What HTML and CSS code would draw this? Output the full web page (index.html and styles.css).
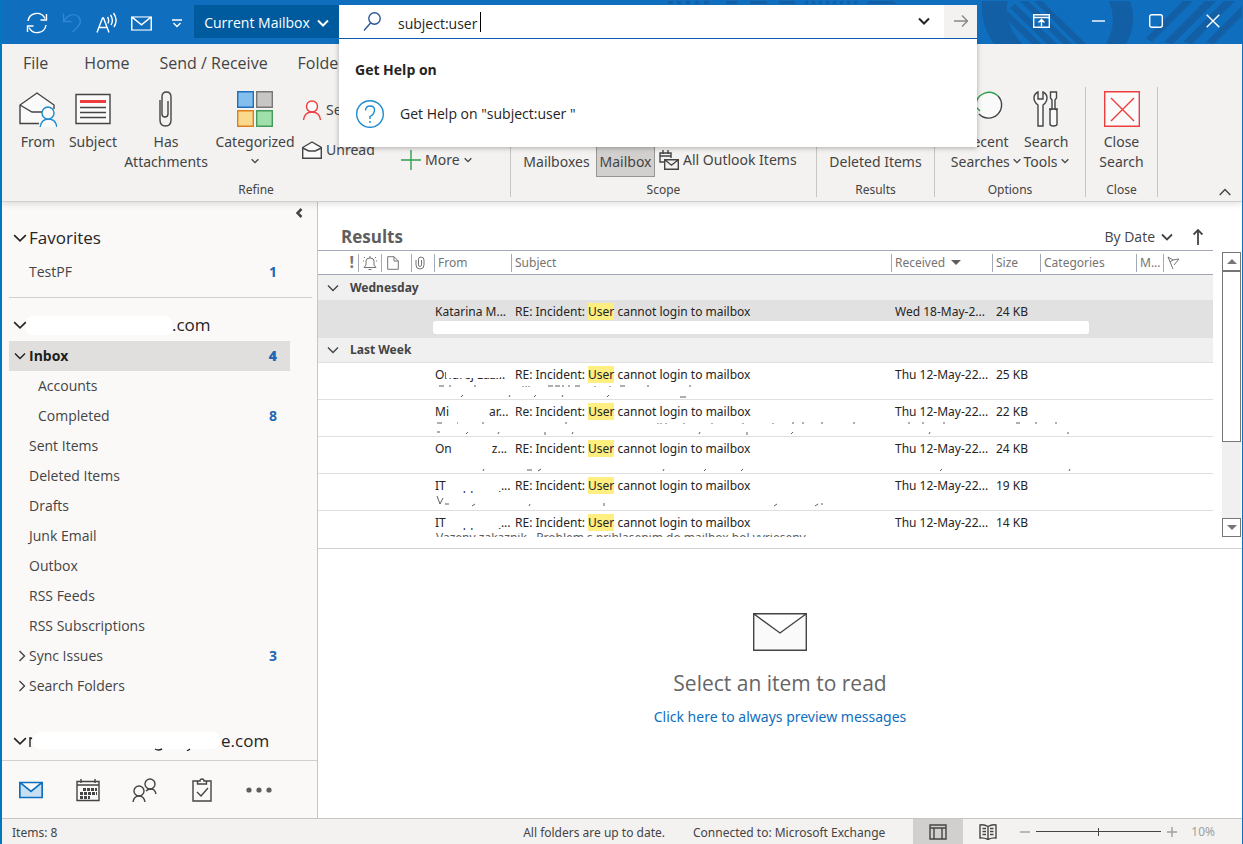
FILE: index.html
```html
<!DOCTYPE html>
<html lang="en">
  <head>
    <meta charset="UTF-8" />
    <meta name="viewport" content="width=device-width, initial-scale=1.0" />
    <title>Inbox - Outlook</title>
    <link rel="stylesheet" href="styles.css">
  </head>
  <body>
    <!-- shared icons -->
    <svg class="defs" aria-hidden="true">
      <symbol id="chevron" viewBox="0 0 12 12"><path d="M1 3.5l5 5 5-5" /></symbol>
      <symbol id="envelope" viewBox="0 0 20 14"><path d="M.7.7h18.6v12.6H.7zM.7.7L10 8.2 19.3.7" /></symbol>
    </svg>

    <header class="titlebar">
      <svg class="pattern" viewBox="0 0 574 44" aria-hidden="true">
        <path d="M0 1h5v3h-5zM9 1h4v3h-4zM18 1h4v3h-4zM27 1h4v3h-4zM36 1h5v3h-5zM58 1h11v3h-11zM82 1h17v3h-17zM111 1h16v3h-16zM137 1h3v3h-3zM144 1h3v3h-3zM151 1h3v3h-3zM158 1h3v3h-3zM165 1h3v3h-3zM172 1h3v3h-3zM179 1h3v3h-3zM186 1h3v3h-3zM198 4l3-3h24l4 3z" />
        <path d="M314 1h26q-6 20 14 43h-28q-14-20-12-43zM441 1h21q8 22-4 43h-20q12-20 3-43z" />
        <path d="M333 14l6-3 35 33h-10zM342 8l5-4 42 40h-10zM352 1h8l44 43h-9zM366 1h8l44 43h-9z" />
        <path d="M478 38L515 1h10l-41 41zM496 42L537 1h11l-43 43zM515 42L556 1h11l-43 43zM538 42L574 6v10l-28 28z" />
      </svg>
      <div class="quick">
        <button aria-label="Send and receive all folders">
          <svg width="22" height="22" viewBox="0 0 22 22"><path d="M2 9a9 9 0 0 1 17-2.500M20.500 2v6h-6M20 13a9 9 0 0 1-17 2.500M1.500 20v-6h6" /></svg>
        </button>
        <button class="dim" aria-label="Undo">
          <svg width="20" height="22" viewBox="0 0 20 22"><path d="M1.500 1.500v8h8M2 9C6 2 13 1 16.500 5s2 7-1 10l-5 5" /></svg>
        </button>
        <button aria-label="Read aloud">
          <svg width="22" height="22" viewBox="0 0 22 22"><path d="M1 20.500L6.500 6h1L13 20.500M3 15.500h8M11.500 5q2 3 .5 6.500M14.500 3q3.500 5 .5 10M17.500 1q5 7 .5 14" /></svg>
        </button>
        <button aria-label="New email">
          <svg width="21" height="15" viewBox="0 0 20 14"><use href="#envelope" /></svg>
        </button>
        <button class="narrow" aria-label="Customize toolbar">
          <svg width="10" height="9" viewBox="0 0 10 9"><path d="M0 1h10M1.500 4L5 7.500 8.500 4" /></svg>
        </button>
      </div>
      <button class="scope-select">Current Mailbox <svg width="12" height="12"><use href="#chevron" /></svg></button>
      <div class="search">
        <form class="search-box">
          <svg class="lens" width="18" height="20" viewBox="0 0 18 20"><circle cx="11.500" cy="6.500" r="5.700" /><path d="M7.500 11L1 18.500" /></svg>
          <input type="text" aria-label="Search" value="subject:user ">
          <button class="search-toggle" type="button" aria-label="Advanced search"><svg width="12" height="12"><use href="#chevron" /></svg></button>
          <button class="search-go" type="button" aria-label="Search now"><svg width="14" height="12" viewBox="0 0 14 12"><path d="M0 6h13M8 .500L13.500 6 8 11.500" /></svg></button>
        </form>
        <div class="suggestions">
          <h2>Get Help on</h2>
          <a href="#">
            <svg width="30" height="28" viewBox="-1 0 30 28"><circle cx="14" cy="14" r="13.300" /><path d="M9.500 10.500q0-4.500 4.500-4.500t4.500 4-4.500 6.500v2.500M14 21v2" /></svg>
            Get Help on "subject:user "
          </a>
        </div>
      </div>
      <div class="window-buttons">
        <button aria-label="Ribbon display options"><svg width="17" height="14" viewBox="0 0 17 14"><path d="M.700.700h15.600v12.600H.700zM.700 3.500h15.600M8.500 12V5.500M5.500 8.500l3-3 3 3" /></svg></button>
        <button aria-label="Minimize"><svg width="13" height="14" viewBox="0 0 13 14"><path d="M0 7h13" /></svg></button>
        <button aria-label="Maximize"><svg width="14" height="14" viewBox="0 0 14 14"><rect x=".7" y=".7" width="12.600" height="12.600" rx="2" /></svg></button>
        <button aria-label="Close"><svg width="14" height="14" viewBox="0 0 14 14"><path d="M.700.700l12.600 12.600M13.300.700L.700 13.300" /></svg></button>
      </div>
    </header>

    <section class="ribbon">
      <nav class="tabs">
        <a href="#">File</a>
        <a href="#">Home</a>
        <a href="#">Send / Receive</a>
        <a href="#">Folder</a>
      </nav>
      <div class="groups">
        <div class="group refine">
          <div class="commands">
            <button class="big w-from">
              <svg width="38" height="36" viewBox="0 0 38 36"><path class="fill" stroke="none" d="M1 14L18 2l17 12v18H1z" /><path d="M20 32.500H1V14L18 2l17 12v4M1 14l12 7h10" /><g class="blue"><path class="fill" d="M21 37q1-9 8.500-9t8.500 9" /><circle class="fill" cx="29" cy="22" r="6" /></g></svg>
              <span>From</span>
            </button>
            <button class="big w-subject">
              <svg width="36" height="36" viewBox="0 0 36 36"><path class="fill" d="M1 3.500h34v29H1z" /><path class="red-bar" d="M5 10.500h26" /><path d="M5 16.500h26M5 21.500h26M5 26.500h26" /></svg>
              <span>Subject</span>
            </button>
            <button class="big w-attach">
              <svg width="36" height="36" viewBox="0 0 36 36"><path d="M20 10v13q0 3-3 3t-3-3V6q0-5 4.500-5T23 6v23q0 6-5.500 6T12 29V9" /></svg>
              <span>Has<br>Attachments</span>
            </button>
            <button class="big w-cat">
              <svg width="36" height="36" viewBox="0 0 36 36"><path fill="#83beec" stroke="#1e6fbe" d="M.7.700h15.600v15.600H.7z" /><path fill="#c8c6c4" stroke="#797775" d="M19.700.700h15.600v15.600H19.700z" /><path fill="#f9d98b" stroke="#e07f1c" d="M.7 19.700h15.600v15.600H.7z" /><path fill="#9fe0aa" stroke="#439c5b" d="M19.700 19.700h15.600v15.600H19.700z" /></svg>
              <span>Categorized</span>
              <svg class="caret" width="8" height="8"><use href="#chevron" /></svg>
            </button>
            <div class="stack wide">
              <button><svg class="red" width="20" height="20" viewBox="0 0 20 20"><circle class="fill" cx="10" cy="6.500" r="5.500" /><path d="M1.500 20q1-8 8.500-8t8.500 8" /></svg>Sent To</button>
              <button><svg width="20" height="18" viewBox="0 0 20 18"><path class="fill" d="M.7 6.500L10 1l9.300 5.500v10.800H.7z" /><path d="M.7 7l6 3h6.600l6-3" /></svg>Unread</button>
            </div>
            <div class="stack more">
              <button><svg class="green" width="20" height="20" viewBox="0 0 20 20"><path d="M10 0v20M0 10h20" /></svg>More <svg class="caret" width="8" height="8"><use href="#chevron" /></svg></button>
            </div>
          </div>
          <h3>Refine</h3>
        </div>
        <div class="group scope">
          <div class="commands">
            <button class="big w-all"><span>All<br>Mailboxes</span></button>
            <button class="big w-box on" aria-label="Current Mailbox"><span>Mailbox</span></button>
            <div class="stack">
              <button><svg width="20" height="20" viewBox="0 0 20 20"><path d="M5 12H1V3h11v5M1 6h11M4 0v4M9 0v4M5.700 9.700h13.600v9.600H5.700zM5.700 9.700l6.800 5.500 6.800-5.500" /></svg>All Outlook Items</button>
            </div>
          </div>
          <h3>Scope</h3>
        </div>
        <div class="group results">
          <div class="commands"><button class="big"><span>Include<br>Deleted Items</span></button></div>
          <h3>Results</h3>
        </div>
        <div class="group options">
          <div class="commands">
            <button class="big">
              <svg width="36" height="36" viewBox="0 0 36 36"><circle class="fill" cx="21" cy="14" r="13" stroke="none" /><path d="M11 23a13 13 0 1 0 19-18" /><path class="green" d="M30 5A13 13 0 0 0 8 14M4 22l4-6 4 4" /></svg>
              <span>Recent<br>Searches <svg class="caret" width="8" height="8"><use href="#chevron" /></svg></span>
            </button>
            <button class="big">
              <svg width="36" height="36" viewBox="0 0 36 36"><path class="fill" d="M10 35V14Q6 11 6 7t4-6v7h5V1q4 2 4 6t-4 7v21z" /><path class="fill" d="M22.500 1h6v6l-1.500 2v9h-3V9l-1.500-2zM22 20q0-2 3.500-2t3.500 2v13q0 2-3.500 2T22 33zM21 18h9" /></svg>
              <span>Search<br>Tools <svg class="caret" width="8" height="8"><use href="#chevron" /></svg></span>
            </button>
          </div>
          <h3>Options</h3>
        </div>
        <div class="group close">
          <div class="commands">
            <button class="big">
              <svg class="red" width="36" height="36" viewBox="0 0 36 36"><path class="fill" d="M.7.700h34.600v34.600H.7z" /><path d="M7 7l23 23M30 7L7 30" /></svg>
              <span>Close<br>Search</span>
            </button>
          </div>
          <h3>Close</h3>
        </div>
        <button class="collapse" aria-label="Collapse the ribbon"><svg width="12" height="8" viewBox="0 0 12 8"><path d="M.7 7L6 1.500 11.300 7" /></svg></button>
      </div>
    </section>

    <div class="main">
      <aside class="sidebar">
        <button class="pane-toggle" aria-label="Minimize the folder pane"><svg width="7" height="10" viewBox="0 0 7 10"><path d="M5.500 1L1.500 5l4 4" /></svg></button>
        <div class="folders">
          <h2><svg width="14" height="14"><use href="#chevron" /></svg>Favorites</h2>
          <a class="favorite" href="#">TestPF <b>1</b></a>
          <hr>
          <h2><svg width="14" height="14"><use href="#chevron" /></svg><span class="blank account"></span>.com</h2>
          <a class="selected" href="#"><svg width="12" height="12"><use href="#chevron" /></svg>Inbox <b>4</b></a>
          <a class="child" href="#">Accounts</a>
          <a class="child" href="#">Completed <b>8</b></a>
          <a href="#">Sent Items</a>
          <a href="#">Deleted Items</a>
          <a href="#">Drafts</a>
          <a href="#">Junk Email</a>
          <a href="#">Outbox</a>
          <a href="#">RSS Feeds</a>
          <a href="#">RSS Subscriptions</a>
          <a href="#"><svg class="closed" width="12" height="12"><use href="#chevron" /></svg>Sync Issues <b>3</b></a>
          <a href="#"><svg class="closed" width="12" height="12"><use href="#chevron" /></svg>Search Folders</a>
          <h2 class="second"><svg width="14" height="14"><use href="#chevron" /></svg><svg class="mailbox" width="192" height="20" viewBox="0 0 192 20"><rect x="4" y="1" width="187" height="17" rx="7" /><path d="M1 6v10M1 8l2-1M126 18q3 2 7 0M161 18l-3 2" /></svg>e.com</h2>
        </div>
        <nav class="modules">
          <a class="current" href="#" aria-label="Mail"><svg width="24" height="18" viewBox="0 0 20 14"><use href="#envelope" /></svg></a>
          <a href="#" aria-label="Calendar"><svg width="24" height="24" viewBox="0 0 24 24"><path d="M1 3.500h22v19H1zM1 7h22M5 1v4M19 1v4" /><path class="dots" d="M7 11.500h14M4 15.500h17M4 19.500h10" /></svg></a>
          <a href="#" aria-label="People"><svg width="25" height="24" viewBox="0 0 25 24"><circle cx="18" cy="6" r="5" /><path d="M14 13q2-2 5-2 4 0 5 5" /><circle cx="7" cy="13" r="5" /><path d="M1 24q1-6 6-6t6 6" /></svg></a>
          <a href="#" aria-label="Tasks"><svg width="20" height="24" viewBox="0 0 20 24"><path d="M5 3H1v20h18V3h-4M5.500 6V3H8q0-2 2-2t2 2h2.500v3zM5 14l4 4 7-8" /></svg></a>
          <a href="#" aria-label="More"><svg width="26" height="6" viewBox="0 0 26 6"><g class="ellipsis"><circle cx="3" cy="3" r="2.600" /><circle cx="13" cy="3" r="2.600" /><circle cx="23" cy="3" r="2.600" /></g></svg></a>
        </nav>
      </aside>

      <main class="content">
        <div class="list-head">
          <h1>Results</h1>
          <button>By Date <svg width="12" height="12"><use href="#chevron" /></svg></button>
          <button aria-label="Reverse sort order"><svg width="10" height="16" viewBox="0 0 10 16"><path d="M5 16V1M.5 5.500L5 1l4.500 4.500" /></svg></button>
        </div>
        <div class="list">
          <table>
            <colgroup>
              <col class="c-imp"><col class="c-bell"><col class="c-type"><col class="c-clip"><col class="c-from"><col><col class="c-date"><col class="c-size"><col class="c-cat"><col class="c-mention"><col class="c-flag">
            </colgroup>
            <thead>
              <tr>
                <th aria-label="Importance"><span class="right">!</span></th>
                <th aria-label="Reminder"><span><svg width="16" height="16" viewBox="0 0 16 16"><path d="M2 12.500h12l-2-2.500V6q0-3-4-3T4 6v4zM6.500 14.500h3M8 1v2M2 2l1 1M14 2l-1 1M1 6h1M14 6h1" /></svg></span></th>
                <th aria-label="Icon"><span class="type"><svg width="12" height="14" viewBox="0 0 12 14"><path d="M.7.700h6.300l4.300 4.300v8.300H.7zM7 .7V5h4.300" /></svg></span></th>
                <th aria-label="Attachment"><span><svg width="10" height="14" viewBox="0 0 10 14"><path d="M1 4v5q0 4 4 4t4-4V4q0-3-3-3T3.500 4v5q0 1.500 1.300 1.500T6.500 9V4" /></svg></span></th>
                <th><span>From</span></th>
                <th><span>Subject</span></th>
                <th><span>Received <i class="sort"></i></span></th>
                <th><span>Size</span></th>
                <th><span>Categories</span></th>
                <th><span>M...</span></th>
                <th aria-label="Flag"><span><svg width="14" height="14" viewBox="0 0 14 14"><path d="M6 13L1 1l5 3 6-1-5 6M3 6l3-2" /></svg></span></th>
              </tr>
            </thead>
            <tbody>
              <tr class="day"><th colspan="11"><svg width="12" height="12"><use href="#chevron" /></svg>Wednesday</th></tr>
              <tr class="mail active">
                <td colspan="4"></td><td>Katarina M...</td><td>RE: Incident: <mark>User</mark> cannot login to mailbox</td><td>Wed 18-May-2...</td><td>24 KB</td><td colspan="3"></td>
              </tr>
              <tr class="preview active"><td colspan="4"></td><td colspan="7"><span class="blank body-text"></span></td></tr>
              <tr class="day"><th colspan="11"><svg width="12" height="12"><use href="#chevron" /></svg>Last Week</th></tr>
            </tbody>
            <tbody class="week">
              <tr class="mail">
                <td colspan="4"></td><td><span class="veil">Ondrej Laz...</span></td><td>RE: Incident: <mark>User</mark> cannot login to mailbox</td><td>Thu 12-May-22...</td><td>25 KB</td><td colspan="3"></td>
              </tr>
              <tr class="preview"><td colspan="4"></td><td colspan="7"><svg width="640" height="14" viewBox="0 0 640 14"><path d="M3 1h5M13 1h2M38 1h2M87 1v1M90 1v1M93 1v1M112 1h5M119 1h5M126 1h2M132 1h2M139 1h5M159 1v1M174 1v1M184 1h5M211 1h2M253 1h2M25 12l2-2M73 12l1-2M98 12l2-2M126 12l1-2M171 12l2-2M244 12h6" /></svg></td></tr>
              <tr class="mail">
                <td colspan="4"></td><td>Mi<span class="gap"></span>ar...</td><td>Re: Incident: <mark>User</mark> cannot login to mailbox</td><td>Thu 12-May-22...</td><td>22 KB</td><td colspan="3"></td>
              </tr>
              <tr class="preview"><td colspan="4"></td><td colspan="7"><svg width="640" height="14" viewBox="0 0 640 14"><path d="M1 1h5M21 1h1M46 1h2M129 1h2M222 1v1M225 1v1M230 1v1M248 1v1M276 1v1M307 1v1M337 1v1M356 1h2M366 1h2M385 1h2M417 1h2M472 1h2M486 1h2M507 1h2M580 1h4M599 1h2M619 1h2M1 10h3M30 12l2-2M62 12l1-2M109 10v3M136 12l1-2M263 12l1-2M311 10v3M355 12l2-2M493 12l1-2M631 11h2" /></svg></td></tr>
              <tr class="mail">
                <td colspan="4"></td><td>On<span class="gap"></span>z...</td><td>RE: Incident: <mark>User</mark> cannot login to mailbox</td><td>Thu 12-May-22...</td><td>24 KB</td><td colspan="3"></td>
              </tr>
              <tr class="preview"><td colspan="4"></td><td colspan="7"><svg width="640" height="14" viewBox="0 0 640 14"><path d="M47 12l1-2M91 11h5M102 12l3-2M227 12l1-2M268 12l2-2M305 12l2-2M504 12l2-2M633 12l1-2" /></svg></td></tr>
              <tr class="mail">
                <td colspan="4"></td><td><span class="veil support">IT Support (...</span></td><td>RE: Incident: <mark>User</mark> cannot login to mailbox</td><td>Thu 12-May-22...</td><td>19 KB</td><td colspan="3"></td>
              </tr>
              <tr class="preview"><td colspan="4"></td><td colspan="7"><svg width="640" height="14" viewBox="0 0 640 14"><path d="M1 0l3 8 3-6M9 8h4M36 10l3-2M93 10l1-2M168 7v3M338 10l3-2M379 10l3-2M386 7v2" /></svg></td></tr>
              <tr class="mail">
                <td colspan="4"></td><td><span class="veil support">IT Support (...</span></td><td>RE: Incident: <mark>User</mark> cannot login to mailbox</td><td>Thu 12-May-22...</td><td>14 KB</td><td colspan="3"></td>
              </tr>
              <tr class="preview last"><td colspan="4"></td><td colspan="7"><div>Vazeny zakaznik,&nbsp; Problem s prihlasenim do mailbox bol vyrieseny.</div></td></tr>
            </tbody>
          </table>
          <div class="scrollbar">
            <button class="up" aria-label="Scroll up"></button>
            <div class="thumb"></div>
            <button class="down" aria-label="Scroll down"></button>
          </div>
        </div>
        <section class="reading">
          <svg width="54" height="38" viewBox="0 0 54 38"><path d="M.7.700h52.600v36.600H.7zM.7.700L27 20 53.300.700" /></svg>
          <p>Select an item to read</p>
          <a href="#">Click here to always preview messages</a>
        </section>
      </main>
    </div>

    <footer class="statusbar">
      <span class="count">Items: 8</span>
      <span class="sync">All folders are up to date.</span>
      <span class="server">Connected to: Microsoft Exchange</span>
      <div class="views">
        <button class="on" aria-label="Normal view"><svg width="18" height="16" viewBox="0 0 18 16"><path d="M1 1h16v14H1zM1 4h16M5 4v11M13 4v11" /></svg></button>
        <button aria-label="Reading view"><svg width="18" height="16" viewBox="0 0 18 16"><path d="M9 2.500Q5 0 1 1v13q4-.500 8 1.500 4-2 8-1.500V1q-4-1-8 1.500v13M3.500 4.500H7M3.500 7.500H7M3.500 10.500H7M11 4.500h3.500M11 7.500h3.500M11 10.500h3.500" /></svg></button>
      </div>
      <div class="zoom">
        <button aria-label="Zoom out"><svg width="10" height="10" viewBox="0 0 10 10"><path d="M0 5h10" /></svg></button>
        <input type="range" min="0" max="100" value="50" aria-label="Zoom">
        <button aria-label="Zoom in"><svg width="10" height="10" viewBox="0 0 10 10"><path d="M0 5h10M5 0v10" /></svg></button>
        <span>10%</span>
      </div>
    </footer>
  </body>
</html>
```
FILE: styles.css
```css
* {
  box-sizing: border-box;
}
body {
  margin: 0;
  height: 100vh;
  display: flex;
  flex-direction: column;
  border-left: 2px solid #0078bb;
  border-right: 1px solid #106ebe;
  background: #fff;
  color: #444;
  font-family: "Open Sans", "Noto Sans", sans-serif;
  font-size: 14px;
  line-height: 20px;
  overflow: hidden;
}
button,
input {
  font: inherit;
  color: inherit;
  border: none;
  background: none;
  padding: 0;
}
a {
  color: inherit;
  text-decoration: none;
}
h1,
h2,
h3,
p {
  margin: 0;
}
svg {
  fill: none;
  stroke: currentColor;
  stroke-width: 1.4;
  flex: none;
}
.defs {
  display: none;
}
.fill {
  fill: #fafafa;
}
.blue {
  stroke: #1e8bcd;
}
.red {
  stroke: #ee3d3d;
}
.green {
  stroke: #30a14e;
}

/* title bar */
.titlebar {
  position: relative;
  z-index: 10;
  display: flex;
  height: 44px;
  background: #106ebe;
  color: #fff;
}
.pattern {
  position: absolute;
  top: 0;
  right: 0;
  width: 574px;
  height: 44px;
  fill: #135fa5;
  stroke: none;
}
.quick {
  display: flex;
  align-items: center;
  width: 192px;
  padding: 2px 0 0 17px;
}
.quick button {
  width: 35px;
  display: grid;
  place-items: center;
}
.quick .dim {
  color: #2f86d6;
}
.scope-select {
  width: 145px;
  height: 33px;
  margin-top: 5px;
  padding-top: 2px;
  background: #005a9e;
  display: flex;
  align-items: center;
  justify-content: center;
  gap: 7px;
}
.scope-select svg,
.search-toggle svg {
  stroke-width: 2;
}
.search {
  position: relative;
  flex: 1;
  margin-top: 5px;
  color: #252423;
}
.search-box {
  display: flex;
  align-items: center;
  height: 34px;
  background: #fff;
  border-bottom: 1px solid #0a5cab;
}
.lens {
  margin: 0 17px 0 24px;
  color: #2b579a;
}
/* the background line is the insertion point */
.search-box input {
  flex: 1;
  min-width: 0;
  height: 24px;
  padding-top: 3px;
  outline: none;
  background: linear-gradient(#000, #000) 82px 2px / 1px 20px no-repeat;
}
.search-toggle {
  width: 40px;
  height: 33px;
}
.search-go {
  width: 33px;
  height: 33px;
  background: #f3f2f1;
  color: #8a8886;
}
.suggestions {
  position: absolute;
  top: 34px;
  left: 0;
  right: 0;
  height: 108px;
  padding: 21px 16px;
  background: #fff;
  box-shadow: 0 1px 5px rgba(0, 0, 0, 0.3);
  clip-path: inset(0 -8px -8px -8px);
}
.suggestions h2 {
  font-size: 14px;
  font-weight: 700;
}
.suggestions a {
  display: flex;
  align-items: center;
  gap: 15px;
  margin-top: 20px;
}
.suggestions svg {
  color: #1e8bcd;
}
.window-buttons {
  position: relative;
  width: 265px;
  display: flex;
  justify-content: flex-end;
  padding: 2px 1px 0 0;
}
.window-buttons button {
  width: 57px;
}

/* ribbon */
.ribbon {
  position: relative;
  z-index: 5;
  background: #f3f2f1;
  border-bottom: 1px solid #d2d0ce;
  box-shadow: 0 2px 6px rgba(0, 0, 0, 0.12);
}
.tabs {
  display: flex;
  gap: 36px;
  height: 42px;
  padding: 8px 21px;
  font-size: 16px;
  line-height: 22px;
}
.tabs a:nth-child(n + 3) {
  margin-left: -6px;
}
.groups {
  display: flex;
  height: 115px;
  padding-top: 1px;
  font-family: "Noto Sans", "Open Sans", sans-serif;
}
.group {
  display: flex;
  flex-direction: column;
  height: 110px;
  border-right: 1px solid #c8c6c4;
}
.group h3 {
  font-size: 12px;
  font-weight: 400;
  line-height: 14px;
  text-align: center;
}
.commands {
  display: flex;
  justify-content: center;
  height: 98px;
}
.refine {
  width: 509px;
}
.scope {
  width: 306px;
}
.results {
  width: 118px;
}
.options {
  width: 151px;
}
.close {
  width: 72px;
}
.refine .commands,
.scope .commands {
  justify-content: flex-start;
}
.options .commands {
  gap: 2px;
}
.big {
  display: flex;
  flex-direction: column;
  align-items: center;
  justify-content: flex-start;
  height: 90px;
  padding: 4px 2px 0;
  white-space: nowrap;
}
.big > svg:first-child {
  margin-bottom: 5px;
}
.big > .caret {
  margin-top: 5px;
}
.caret {
  stroke-width: 2;
}
.big span .caret {
  vertical-align: 2px;
}
.options .big {
  padding: 4px 0 0;
}
.red-bar {
  stroke: #ee3d3d;
  stroke-width: 3;
}
.w-from {
  width: 62px;
  margin-left: 5px;
}
.w-subject {
  width: 48px;
}
.w-attach {
  width: 98px;
}
.w-cat {
  width: 80px;
}
.stack {
  display: flex;
  flex-direction: column;
  justify-content: flex-end;
  padding-bottom: 13px;
  gap: 20px;
}
.stack button {
  display: flex;
  align-items: center;
  gap: 4px;
  white-space: nowrap;
}
.stack.wide {
  width: 80px;
  padding: 0 0 23px 7px;
}
.stack.more {
  padding-left: 26px;
}
.scope .big,
.results .big {
  padding-top: 45px;
}
.w-all {
  width: 85px;
  padding-left: 8px;
}
.scope .w-box {
  width: 59px;
  padding-top: 64px;
  background: #d2d0ce;
  border: 1px solid #979593;
}
.scope .stack {
  padding-left: 4px;
}
.collapse {
  margin: auto 11px 0 auto;
}

/* folder pane */
.main {
  flex: 1;
  min-height: 0;
  display: flex;
}
.sidebar {
  width: 316px;
  display: flex;
  flex-direction: column;
  background: #faf9f8;
  border-right: 1px solid #c8c6c4;
}
.pane-toggle {
  align-self: flex-end;
  height: 20px;
  margin-right: 14px;
  padding-top: 2px;
  line-height: 10px;
}
.pane-toggle svg {
  stroke-width: 2.5;
}
.folders {
  flex: 1;
}
.folders h2 {
  display: flex;
  align-items: center;
  height: 32px;
  padding-left: 11px;
  font-size: 17px;
  font-weight: 400;
  color: #252423;
}
.folders h2 svg:first-child {
  margin-right: 2px;
}
.folders a {
  display: flex;
  align-items: center;
  height: 30px;
  margin: 0 27px 0 7px;
  padding: 0 13px 0 20px;
}
.folders a svg {
  margin: 0 3px 0 -15px;
}
.folders a .closed {
  margin: 0 1px 0 -13px;
  transform: rotate(-90deg);
}
.folders b {
  margin-left: auto;
  color: #2266b5;
}
.folders .favorite {
  margin-top: 3px;
}
.folders .child {
  padding-left: 29px;
}
.folders .selected {
  background: #e1dfdd;
  color: #201f1e;
  font-weight: 700;
}
.folders hr {
  margin: 10px 5px 11px 7px;
  border: none;
  border-top: 1px solid #d2d0ce;
}
.folders .second {
  margin-top: 24px;
}
.blank {
  display: block;
  background: #fff;
  border-radius: 6px;
}
.account {
  width: 146px;
  height: 19px;
  margin-left: -3px;
}
.mailbox rect {
  fill: #fff;
  stroke: none;
}
.modules {
  display: flex;
  align-items: center;
  height: 58px;
  padding-right: 30px;
  border-top: 1px solid #d2d0ce;
}
.modules a {
  flex: 1;
  display: grid;
  place-items: center;
}
.modules .current {
  color: #106ebe;
}
.modules .current svg {
  fill: #c7e0f4;
}
.dots {
  stroke-width: 3;
  stroke-dasharray: 3 1;
}
.ellipsis {
  fill: #605e5c;
  stroke: none;
}

/* message list */
.content {
  flex: 1;
  min-width: 0;
  display: flex;
  flex-direction: column;
}
.list-head {
  display: flex;
  align-items: center;
  gap: 20px;
  height: 48px;
  padding: 22px 39px 0 23px;
}
.list-head h1 {
  flex: 1;
  font-size: 17px;
  font-weight: 700;
  color: #605e5c;
}
.list-head button {
  display: flex;
  align-items: center;
  gap: 6px;
}
.list-head svg {
  stroke-width: 1.8;
}
.list {
  display: flex;
  gap: 9px;
  padding-right: 1px;
  border-bottom: 1px solid #d2d0ce;
  padding-bottom: 11px;
}
table {
  flex: 1;
  width: 0;
  table-layout: fixed;
  border-collapse: collapse;
  font-family: "Noto Sans", "Open Sans", sans-serif;
  font-size: 12px;
  line-height: 17px;
  color: #252423;
}
th,
td {
  padding: 0;
  text-align: left;
  white-space: nowrap;
}
.c-imp {
  width: 41px;
}
.c-bell,
.c-clip {
  width: 23px;
}
.c-type {
  width: 30px;
}
.c-from {
  width: 77px;
}
.c-date {
  width: 101px;
}
.c-size {
  width: 48px;
}
.c-cat {
  width: 96px;
}
.c-mention {
  width: 27px;
}
.c-flag {
  width: 49px;
}
thead th {
  height: 24px;
  border-top: 1px solid #a3a9b8;
  border-bottom: 1px solid #a3a9b8;
  font-weight: 400;
  color: #767472;
}
thead span {
  display: flex;
  align-items: center;
  height: 18px;
  padding-left: 3px;
  border-right: 1px solid #a3a9b8;
}
thead th:last-child span {
  border: none;
}
thead svg {
  stroke-width: 1;
}
thead .type {
  padding-left: 5px;
}
thead .right {
  justify-content: flex-end;
  padding-right: 4px;
  font-size: 16px;
  font-weight: 700;
}
.sort {
  margin-left: 6px;
  border: 5px solid transparent;
  border-top-color: #605e5c;
  border-bottom: none;
}
.day th {
  height: 25px;
  background: #f0f0f0;
  color: #444;
  font-weight: 700;
}
.day svg {
  margin: 0 11px 0 9px;
  vertical-align: -2px;
}
.week {
  border-top: 1px solid #e1dfdd;
}
.mail td {
  height: 22px;
  padding: 3px 0 0 3px;
  vertical-align: top;
}
.mail td:nth-child(2) {
  padding-left: 0;
}
.mail.active td,
.preview.active td {
  background: #e1e1e1;
}
mark {
  background: #ffee80;
  color: inherit;
  display: inline-block;
}
.preview td {
  height: 15px;
  line-height: 0;
  vertical-align: top;
  color: #605e5c;
}
.preview.active td {
  height: 16px;
}
.preview svg {
  display: block;
  margin-left: 1px;
  stroke-width: 1;
}
.week .preview td {
  border-bottom: 1px solid #e1dfdd;
}
.body-text {
  width: 656px;
  height: 13px;
  margin: -1px 0 0 -2px;
  border-radius: 3px;
}
.gap {
  display: inline-block;
  width: 40px;
}
/* names hidden down to their descenders */
.veil {
  position: relative;
}
.veil::after {
  content: "";
  position: absolute;
  top: 1px;
  left: 11px;
  width: 54px;
  height: 11px;
  background: #fff;
}
.veil.support::after {
  left: 12px;
  height: 13px;
}
.week .preview.last td {
  height: 4px;
  border: none;
}
.last div {
  height: 4px;
  line-height: 10px;
  overflow: hidden;
  padding-left: 1px;
}
.scrollbar {
  width: 19px;
  margin-top: 2px;
  display: flex;
  flex-direction: column;
  background: #f0f0f0;
}
.scrollbar button {
  display: grid;
  place-items: center;
  height: 19px;
  border: 1px solid #767676;
  background: #fff;
}
.scrollbar button::before {
  content: "";
  border: 5px solid transparent;
}
.scrollbar .up::before {
  border-bottom-color: #767676;
  border-top: none;
}
.scrollbar .down::before {
  border-top-color: #767676;
  border-bottom: none;
}
.thumb {
  height: 60%;
  margin-bottom: auto;
  border: 1px solid #767676;
  background: #fff;
}

/* reading pane */
.reading {
  display: flex;
  flex-direction: column;
  align-items: center;
  padding-top: 64px;
}
.reading svg {
  fill: #fafafa;
}
.reading p {
  margin: 16px 0 8px;
  font-size: 21px;
  line-height: 32px;
  color: #666;
}
.reading a {
  color: #106ebe;
  font-family: "Noto Sans", "Open Sans", sans-serif;
}

/* status bar */
.statusbar {
  display: flex;
  align-items: center;
  height: 26px;
  padding-left: 10px;
  border-top: 1px solid #c8c6c4;
  background: #f3f2f1;
  font-family: "Noto Sans", "Open Sans", sans-serif;
  font-size: 12px;
}
.statusbar > span {
  padding-top: 2px;
}
.count {
  flex: 1;
}
.sync {
  margin-right: 28px;
}
.server {
  margin-right: 28px;
}
.views {
  display: flex;
  align-self: stretch;
}
.views button {
  width: 50px;
  display: grid;
  place-items: center;
}
.views .on {
  background: #d2d0ce;
}
.zoom {
  display: flex;
  align-items: center;
  gap: 6px;
  padding: 0 27px 0 7px;
  color: #a19f9d;
}
.zoom button {
  display: grid;
}
.zoom span {
  margin-left: 8px;
}
.zoom input {
  appearance: none;
  width: 125px;
  height: 10px;
  margin: 0;
  background: linear-gradient(#444, #444) center / 100% 1px no-repeat;
}
.zoom input::-webkit-slider-thumb {
  appearance: none;
  width: 1px;
  height: 8px;
  background: #444;
}
```
